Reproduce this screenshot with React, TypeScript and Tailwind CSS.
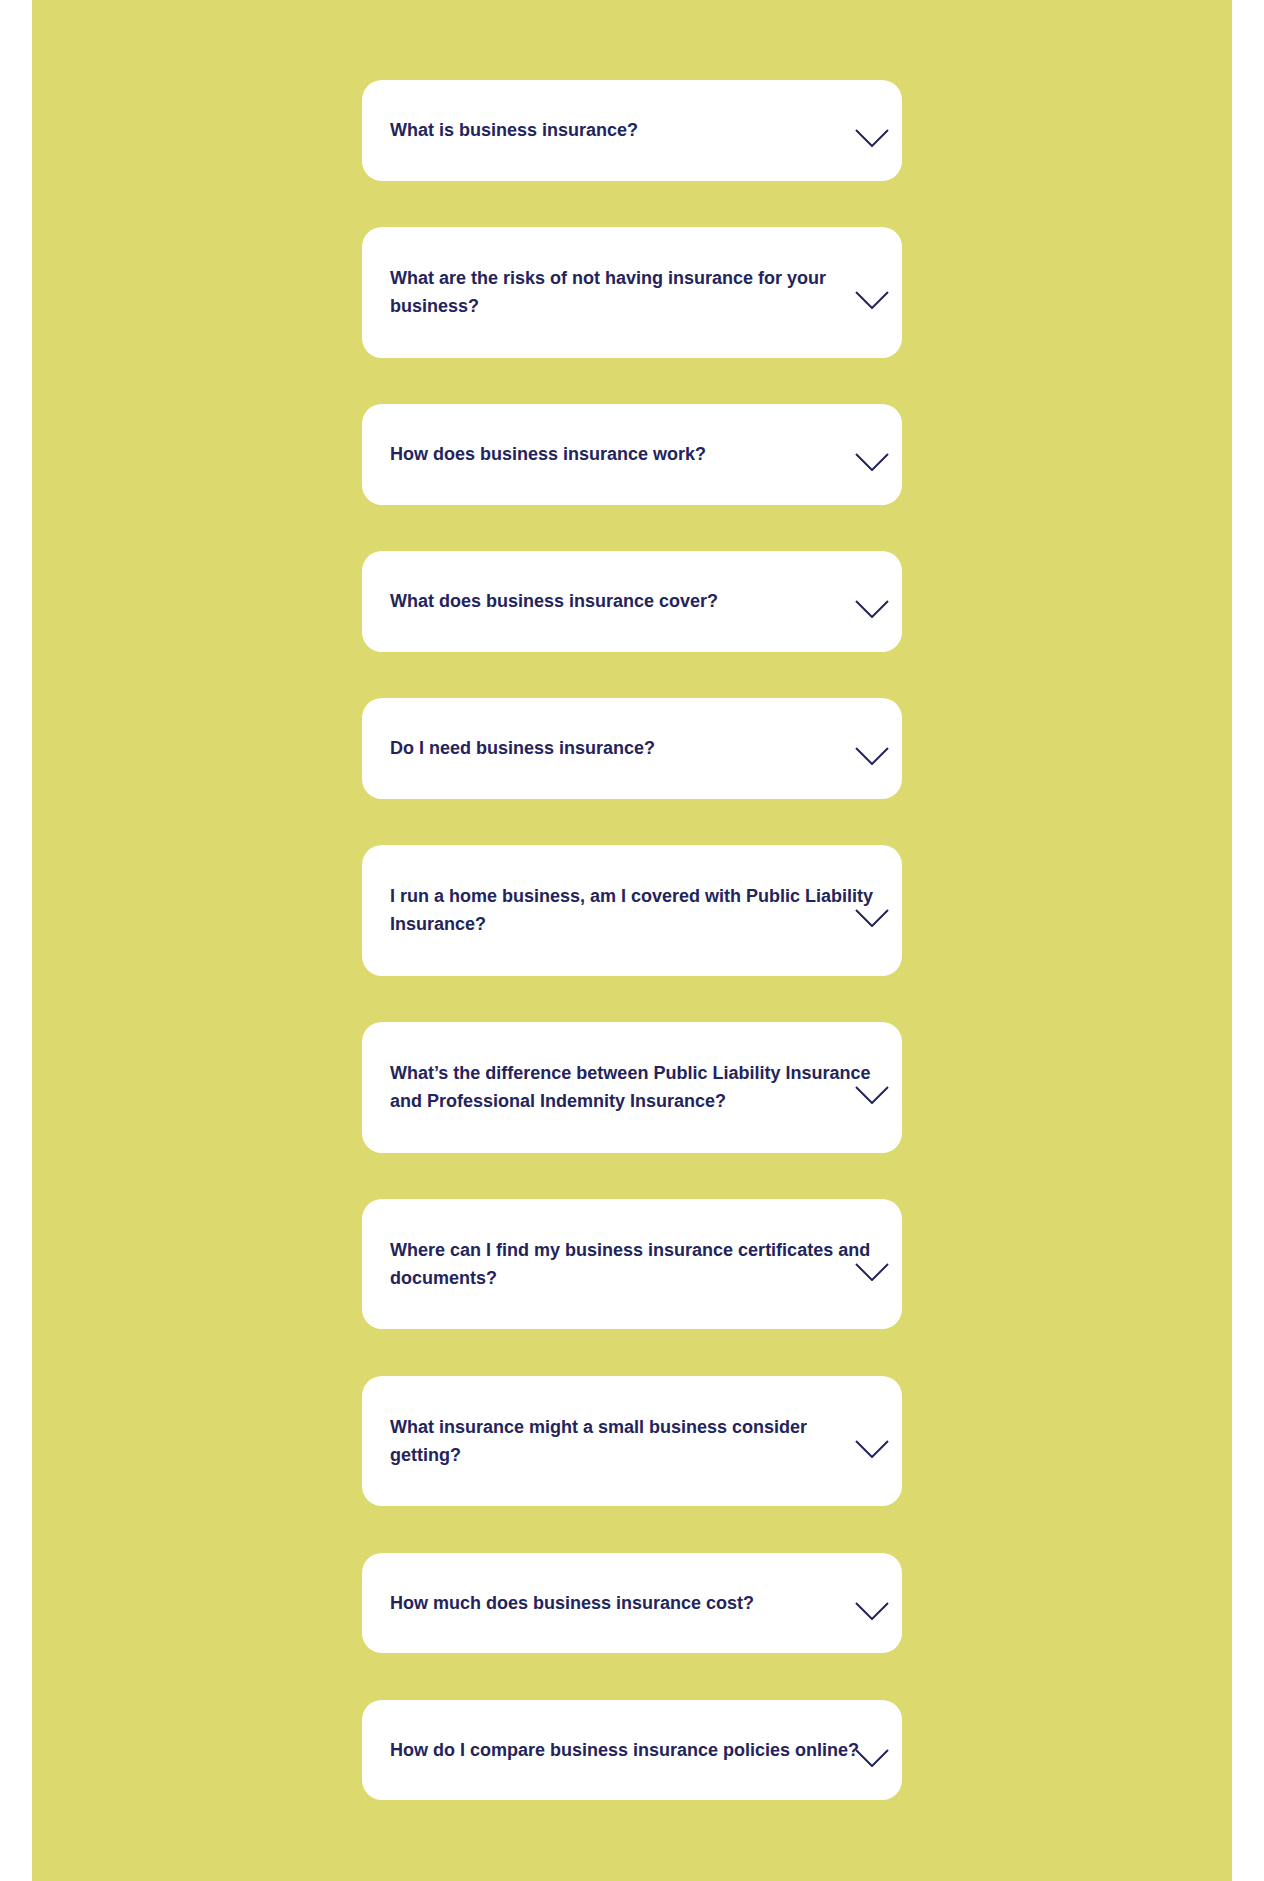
const questions: [string, boolean][] = [
  ['What is business insurance?', false],
  ['What are the risks of not having insurance for your business?', true],
  ['How does business insurance work?', false],
  ['What does business insurance cover?', false],
  ['Do I need business insurance?', false],
  ['I run a home business, am I covered with Public Liability Insurance?', true],
  ['What’s the difference between Public Liability Insurance and Professional Indemnity Insurance?', true],
  ['Where can I find my business insurance certificates and documents?', true],
  ['What insurance might a small business consider getting?', true],
  ['How much does business insurance cost?', false],
  ['How do I compare business insurance policies online?', false],
]

function Chevron() {
  return (
    <svg width="34" height="18" viewBox="0 0 34 18" fill="none" className="block">
      <polyline points="1,1 17,17 33,1" stroke="#24245c" strokeWidth="2" />
    </svg>
  )
}

function FaqItem({ q, wrap }: { q: string; wrap: boolean }) {
  return (
    <div className={`relative bg-white rounded-[20px] px-7 ${wrap ? 'py-[37.3px]' : 'py-[36.3px]'}`}>
      <p className="text-[18px] leading-[28px] font-bold text-[#24245c]">{q}</p>
      <div className="absolute right-[13px] top-1/2 -mt-[1px]">
        <Chevron />
      </div>
    </div>
  )
}

export default function App() {
  return (
    <div className="min-h-[1881px] bg-white px-8" style={{ fontFamily: '"Liberation Sans", Arial, sans-serif' }}>
      <div className="min-h-[1881px] bg-[#dcda6e] pt-20 pb-20">
        <div className="w-[540px] mx-auto flex flex-col gap-[46.4px]">
          {questions.map(([q, wrap]) => <FaqItem key={q} q={q} wrap={wrap} />)}
        </div>
      </div>
    </div>
  )
}
